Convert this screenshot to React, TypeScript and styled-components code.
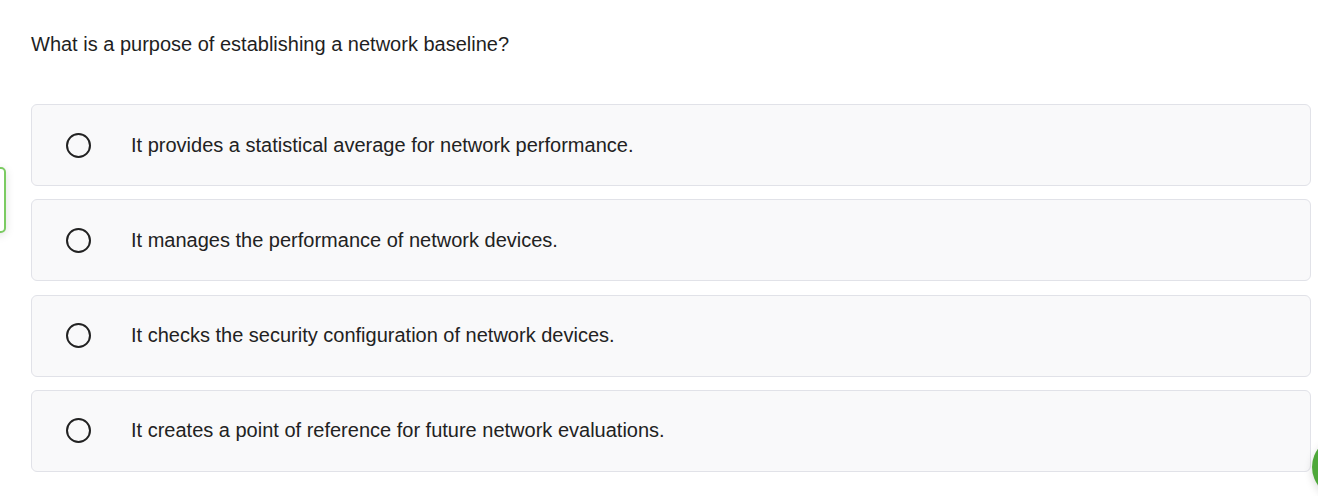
import React from "react";
import styled, { createGlobalStyle } from "styled-components";

const Global = createGlobalStyle`
  html, body { margin: 0; padding: 0; background: #ffffff; }
  body { font-family: "Liberation Sans", Arial, sans-serif; color: #212529; overflow: hidden; }
`;

const Page = styled.div`
  position: relative;
  width: 1318px;
  height: 496px;
  box-sizing: border-box;
  padding: 30px 8px 0 31px;
`;

const Question = styled.div`
  font-size: 20px;
  line-height: 28px;
  color: #1f1f1f;
  margin-bottom: 46px;
`;

const Options = styled.div`
  display: flex;
  flex-direction: column;
  gap: 13.33px;
  width: 1280px;
`;

const Card = styled.label`
  display: flex;
  align-items: center;
  height: 82px;
  box-sizing: border-box;
  background: #f9f9fa;
  border: 1px solid #e1e2e8;
  border-radius: 6px;
  padding-left: 34px;
  cursor: pointer;
`;

const Radio = styled.span`
  width: 25px;
  height: 25px;
  box-sizing: border-box;
  border: 2.5px solid #222;
  border-radius: 50%;
  flex: none;
  margin-right: 40px;
`;

const OptionText = styled.span`
  font-size: 20px;
  color: #222;
`;

const SideTab = styled.div`
  position: absolute;
  left: -20px;
  top: 167px;
  width: 22px;
  height: 62px;
  background: #fff;
  border: 2px solid #7bcb62;
  border-radius: 5px;
  box-shadow: 0 2px 10px rgba(0, 0, 0, 0.12);
`;

const Fab = styled.div`
  position: absolute;
  left: 1312px;
  top: 436px;
  width: 62px;
  height: 62px;
  border-radius: 50%;
  background: #4ea83a;
  box-shadow: 0 3px 8px rgba(0, 0, 0, 0.15);
`;

const options = [
  "It provides a statistical average for network performance.",
  "It manages the performance of network devices.",
  "It checks the security configuration of network devices.",
  "It creates a point of reference for future network evaluations.",
];

export default function App() {
  return (
    <>
      <Global />
      <Page>
        <Question>What is a purpose of establishing a network baseline?</Question>
        <Options>
          {options.map((o) => (
            <Card key={o}>
              <Radio />
              <OptionText>{o}</OptionText>
            </Card>
          ))}
        </Options>
        <SideTab />
        <Fab />
      </Page>
    </>
  );
}
